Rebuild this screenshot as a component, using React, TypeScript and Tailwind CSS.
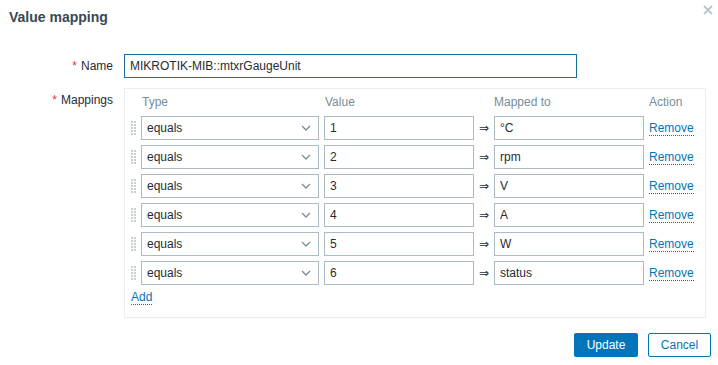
import React from 'react';

const rows = [
  { value: '1', mapped: '°C' },
  { value: '2', mapped: 'rpm' },
  { value: '3', mapped: 'V' },
  { value: '4', mapped: 'A' },
  { value: '5', mapped: 'W' },
  { value: '6', mapped: 'status' },
];

const DragHandle = () => (
  <svg width="5" height="14" viewBox="0 0 5 14" className="block">
    {[0, 3, 6, 9, 12].map((y) => (
      <g key={y} fill="#c5d0d6">
        <rect x="0" y={y} width="2" height="2" />
        <rect x="3" y={y} width="2" height="2" />
      </g>
    ))}
  </svg>
);

const Chevron = () => (
  <svg width="10" height="6" viewBox="0 0 10 6" className="block">
    <path d="M1 1 L5 5 L9 1" fill="none" stroke="#768d99" strokeWidth="1.3" />
  </svg>
);

export default function App() {
  return (
    <div className="relative w-[718px] h-[365px] bg-white text-[12px] text-[#1f2c33] font-['Liberation_Sans',Arial,sans-serif] overflow-hidden">
      {/* Header */}
      <div className="px-[9px] pt-[9px] h-[54px]">
        <h4 className="text-[14px] font-bold leading-[17px] text-[#384955]">Value mapping</h4>
      </div>
      <button className="absolute right-[4px] top-[4px] w-[12px] h-[12px] flex items-center justify-center">
        <svg width="10" height="10" viewBox="0 0 10 10">
          <path d="M1 1 L9 9 M9 1 L1 9" stroke="#b8c4ca" strokeWidth="1.8" />
        </svg>
      </button>

      {/* Form */}
      <div className="flex flex-col">
        <div className="flex gap-[11px]">
          <label className="w-[113px] text-right leading-[24px]">
            <span className="text-[#e33734] mr-[4px]">*</span>Name
          </label>
          <input
            readOnly
            value="MIKROTIK-MIB::mtxrGaugeUnit"
            className="w-[453px] h-[24px] border border-[#1c6a9e] px-[5px] outline-none text-[12px] text-[#1f2c33]"
          />
        </div>

        <div className="flex gap-[11px] mt-[10px]">
          <label className="w-[113px] text-right leading-[24px]">
            <span className="text-[#e33734] mr-[4px]">*</span>Mappings
          </label>
          <div className="w-[582px] h-[230px] border border-[#ebeef0] pl-[6px] pt-[4px]">
            <div className="flex h-[17px] items-center text-[#768d99] mb-[6px]">
              <div className="w-[10px]" />
              <div className="w-[183px] pl-[1px]">Type</div>
              <div className="w-[170px] pl-[1px]">Value</div>
              <div className="w-[155px]">Mapped to</div>
              <div>Action</div>
            </div>
            <div className="flex flex-col gap-[5px]">
              {rows.map((r) => (
                <div key={r.value} className="flex items-center h-[24px]">
                  <div className="w-[10px]">
                    <DragHandle />
                  </div>
                  <div className="w-[178px] h-[24px] border border-[#acbbc2] flex items-center justify-between pl-[5px] pr-[7px]">
                    <span>equals</span>
                    <Chevron />
                  </div>
                  <input
                    readOnly
                    value={r.value}
                    className="ml-[5px] w-[150px] h-[24px] border border-[#acbbc2] px-[5px] outline-none text-[12px] text-[#1f2c33]"
                  />
                  <div className="w-[20px] text-center font-['DejaVu_Sans',sans-serif] text-[12px] leading-[14px]">⇒</div>
                  <input
                    readOnly
                    value={r.mapped}
                    className="w-[150px] h-[24px] border border-[#acbbc2] px-[5px] outline-none text-[12px] text-[#1f2c33]"
                  />
                  <a className="ml-[5px] text-[#0275b8] leading-[14px] border-b border-dotted border-[#0275b8] cursor-pointer">
                    Remove
                  </a>
                </div>
              ))}
            </div>
            <div className="mt-[4px] leading-[16px]">
              <a className="text-[#0275b8] border-b border-dotted border-[#0275b8] cursor-pointer">Add</a>
            </div>
          </div>
        </div>

        {/* Footer */}
        <div className="flex justify-end gap-[10px] pr-[7px] mt-[15px]">
          <button className="w-[64px] h-[24px] rounded-[2px] bg-[#0275b8] text-white text-[12px]">Update</button>
          <button className="w-[63px] h-[24px] rounded-[2px] border border-[#0275b8] text-[#0275b8] bg-white text-[12px]">
            Cancel
          </button>
        </div>
      </div>
    </div>
  );
}
